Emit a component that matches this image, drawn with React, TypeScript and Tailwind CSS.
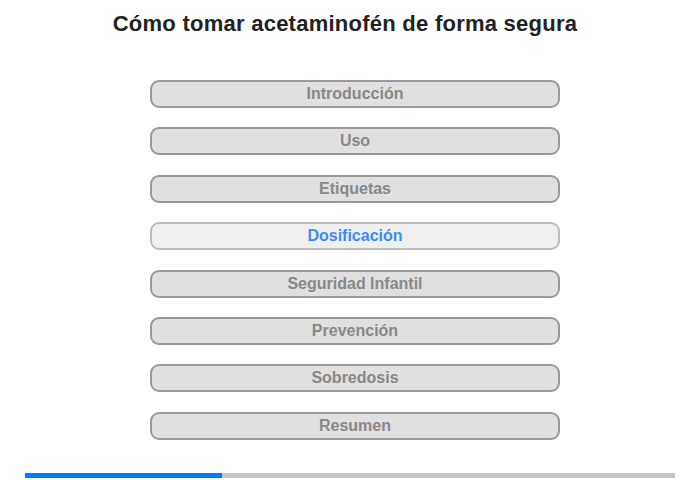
import React from 'react';

const sections = [
  'Introducción',
  'Uso',
  'Etiquetas',
  'Dosificación',
  'Seguridad Infantil',
  'Prevención',
  'Sobredosis',
  'Resumen',
];

const active = 'Dosificación';

const App = () => {
  return (
    <div className="w-[700px] h-[480px] bg-white font-['Liberation_Sans',Arial,sans-serif] flex flex-col">
      <h1 className="pt-[8px] h-[80px] text-center text-[22px] leading-[32px] tracking-[0.25px] font-bold text-[#222] pr-[10px]">
        Cómo tomar acetaminofén de forma segura
      </h1>
      <div className="flex flex-col gap-[19.4px] pl-[150px]">
        {sections.map((s) => (
          <button
            key={s}
            className={
              s === active
                ? 'w-[410px] h-[28px] rounded-[9px] border-2 border-[#bdbdbd] bg-[#efefef] text-[16px] font-bold text-[#3b8cf6]'
                : 'w-[410px] h-[28px] rounded-[9px] border-2 border-[#999] bg-[#e0e0e0] text-[16px] font-bold text-[#888]'
            }
          >
            {s}
          </button>
        ))}
      </div>
      <div className="mt-auto mb-[2px] mx-[25px] h-[5px] bg-[#c6c6c6] flex">
        <div className="w-[197px] bg-[#007bff]" />
      </div>
    </div>
  );
};

export default App;
